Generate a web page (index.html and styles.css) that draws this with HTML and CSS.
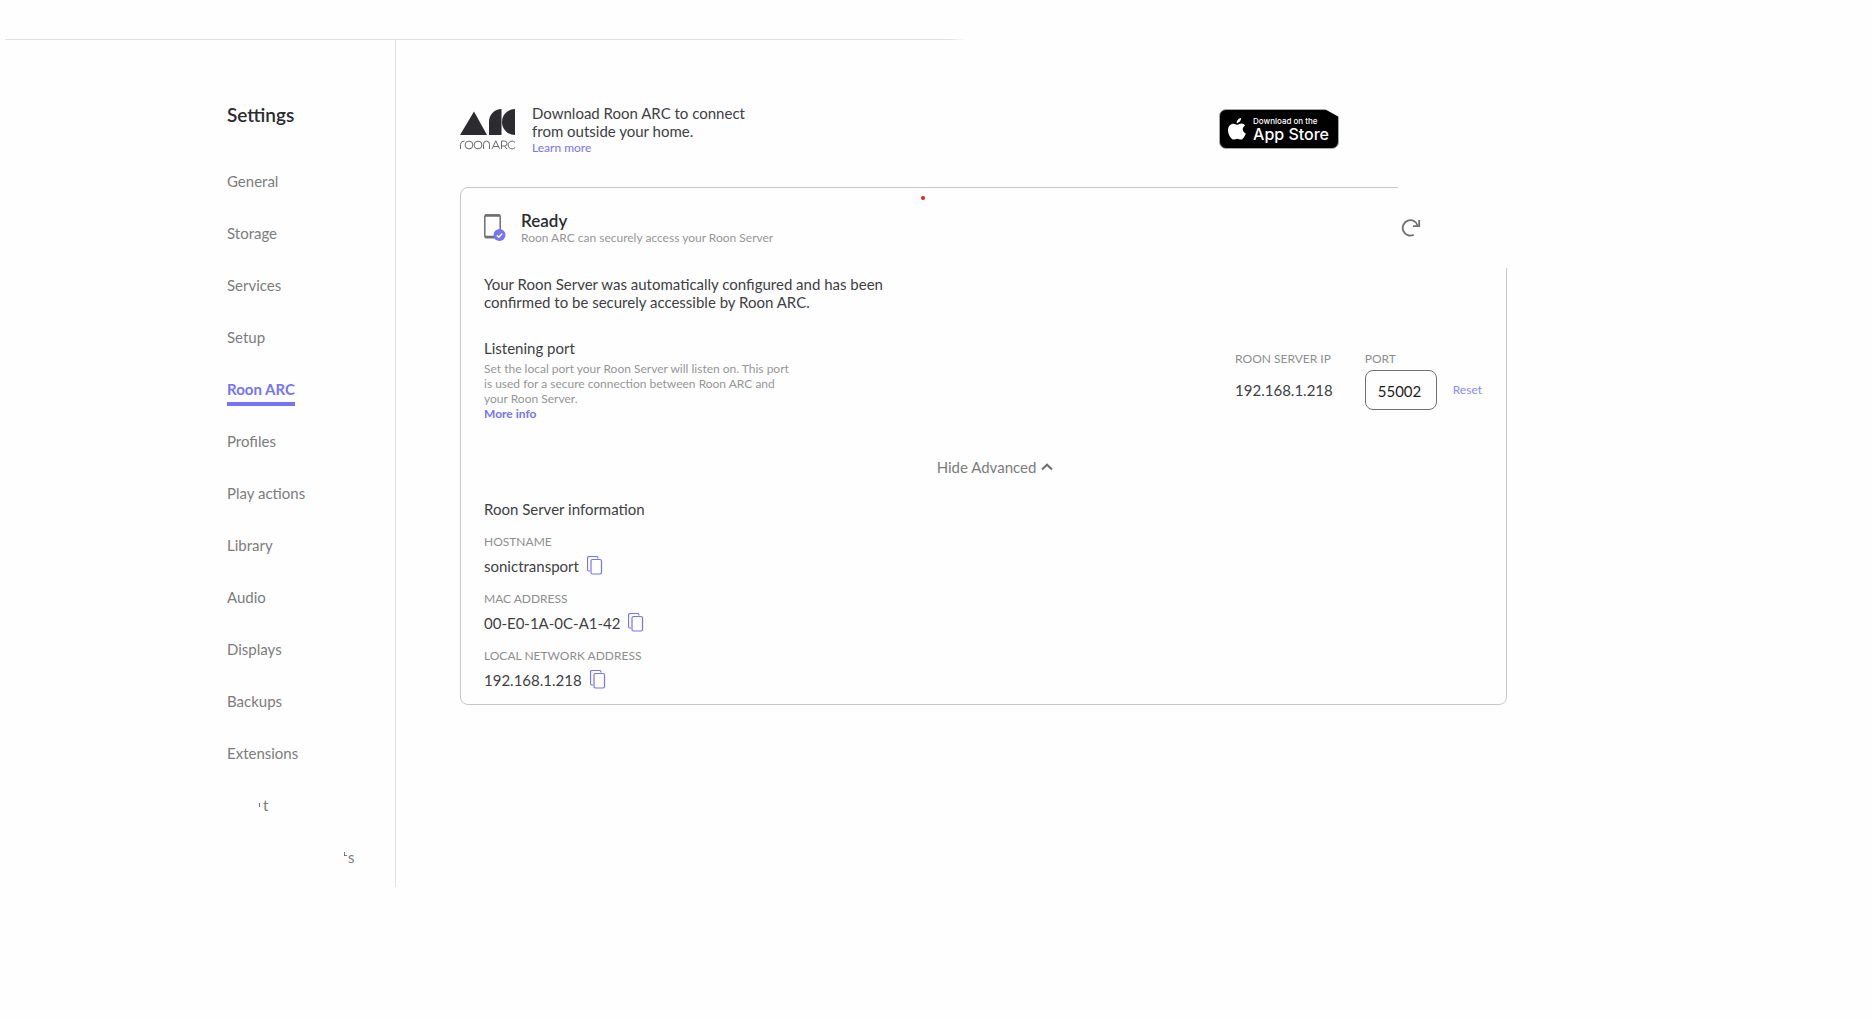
FILE: index.html
```
<!DOCTYPE html>
<html lang="en">
<head>
  <meta charset="UTF-8">
  <meta name="viewport" content="width=device-width, initial-scale=1.0">
  <title>Settings - Roon ARC</title>
  <link rel="stylesheet" href="styles.css">
</head>
<body>
<header class="topbar"></header>

<div class="layout">
  <aside class="sidebar">
    <h1>Settings</h1>
    <nav>
      <a href="#">General</a>
      <a href="#">Storage</a>
      <a href="#">Services</a>
      <a href="#">Setup</a>
      <a href="#" class="active">Roon ARC</a>
      <a href="#">Profiles</a>
      <a href="#">Play actions</a>
      <a href="#">Library</a>
      <a href="#">Audio</a>
      <a href="#">Displays</a>
      <a href="#">Backups</a>
      <a href="#">Extensions</a>
      <a href="#" class="faded"><i class="tick"></i>t</a>
      <a href="#" class="faded far"><i class="tick corner"></i>s</a>
    </nav>
  </aside>

  <main>
    <section class="download">
      <svg class="logo" width="56" height="42" viewBox="0 0 56 42" role="img" aria-label="Roon ARC">
        <g fill="#2b2b30">
          <path d="M0 26L14 2.500L27 26z"/>
          <path d="M29 26V12.500A12.500 12.500 0 0 1 41.500 0V26z"/>
          <path d="M55 0V26A13 13 0 0 1 55 0z"/>
        </g>
        <g fill="none" stroke="#6a6a6e" stroke-width="1">
          <path d="M.5 40V35.500Q.5 32 4.500 32"/>
          <circle cx="9" cy="36" r="3.900"/>
          <circle cx="18" cy="36" r="3.900"/>
          <path d="M23.500 40V35.500A3 3.500 0 0 1 29.500 35.500V40"/>
          <path d="M32 40L35.800 31.800L39.600 40M33.300 37.500H38.300"/>
          <path d="M41.500 40V32H44.500A2.500 2.500 0 0 1 44.500 37H41.500M44.500 37L47 40"/>
          <path d="M55 33.500A3.900 3.900 0 1 0 55 38.500"/>
        </g>
      </svg>
      <div class="download-text">
        <p>Download Roon ARC to connect<br>from outside your home.</p>
        <a href="#">Learn more</a>
      </div>
      <a href="#" class="badge">
        <svg width="18" height="22" viewBox="0 0 18 22" fill="#fff" aria-hidden="true">
          <path d="M13 0C13.200 2.600 11 5 8.700 5C8.400 2.600 10.700 .3 13 0z"/>
          <path d="M17 7.600C13.600 9.700 14.300 14 17.800 15.400C16.700 18.400 14.900 21.600 12.800 21.600C11.500 21.600 11 20.800 9.300 20.800C7.600 20.800 7 21.600 5.800 21.600C3.200 21.600 0 16.500 0 12.200C0 8 2.700 5.700 5.300 5.700C7 5.700 8.200 6.800 9.400 6.800C10.500 6.800 11.800 5.600 13.700 5.600C15 5.600 16.300 6.400 17 7.600z"/>
        </svg>
        <span class="badge-text"><small>Download on the</small>App Store</span>
      </a>
    </section>

    <section class="card">
      <i class="dot"></i>
      <div class="status">
        <svg width="22" height="28" viewBox="0 0 22 28" aria-hidden="true">
          <rect x=".8" y="1" width="15.400" height="22.500" rx="1.500" fill="none" stroke="#6e6e72" stroke-width="1.500"/>
          <path d="M1 1.500H16M1 23H11" stroke="#6e6e72" stroke-width="2.500"/>
          <circle cx="15.500" cy="21" r="6" fill="#7574f3"/>
          <path d="M12.800 21.200L14.800 23.200L18.300 19.500" fill="none" stroke="#fff" stroke-width="1.300"/>
        </svg>
        <div class="status-text">
          <h2>Ready</h2>
          <p class="hint">Roon ARC can securely access your Roon Server</p>
        </div>
        <button class="refresh" aria-label="Refresh">
          <svg width="20" height="18" viewBox="0 0 20 18" fill="none" stroke="#707072" stroke-width="1.800">
            <path d="M12.800 15.800A7.700 7.700 0 1 1 16.800 6.800"/>
            <path d="M18.200 1V7.200H12"/>
          </svg>
        </button>
      </div>

      <p class="summary">Your Roon Server was automatically configured and has been<br>confirmed to be securely accessible by Roon ARC.</p>

      <div class="port-row">
        <div class="port-info">
          <h3>Listening port</h3>
          <p class="hint">Set the local port your Roon Server will listen on. This port<br>is used for a secure connection between Roon ARC and<br>your Roon Server.</p>
          <a href="#">More info</a>
        </div>
        <div class="field">
          <span class="label">ROON SERVER IP</span>
          <span class="ip">192.168.1.218</span>
        </div>
        <div class="field">
          <label class="label" for="port">PORT</label>
          <input type="text" id="port" value="55002">
        </div>
        <button class="reset">Reset</button>
      </div>

      <button class="advanced">Hide Advanced
        <svg width="12" height="8" viewBox="0 0 12 8" fill="none" stroke="#707072" stroke-width="2"><path d="M1 6.500L6 1.700L11 6.500"/></svg>
      </button>

      <h3>Roon Server information</h3>
      <dl>
        <dt>HOSTNAME</dt>
        <dd>sonictransport
          <button class="copy" aria-label="Copy hostname"><svg width="16" height="20" viewBox="0 0 16 20"><path d="M3 15H2Q.5 15 .5 13.500V2.500Q.5 .5 2.500 .5H9.500Q11 .5 11 2.500"/><rect x="4" y="3.500" width="10.500" height="14.500" rx="1.500"/></svg></button>
        </dd>
        <dt>MAC ADDRESS</dt>
        <dd>00-E0-1A-0C-A1-42
          <button class="copy" aria-label="Copy MAC address"><svg width="16" height="20" viewBox="0 0 16 20"><path d="M3 15H2Q.5 15 .5 13.500V2.500Q.5 .5 2.500 .5H9.500Q11 .5 11 2.500"/><rect x="4" y="3.500" width="10.500" height="14.500" rx="1.500"/></svg></button>
        </dd>
        <dt>LOCAL NETWORK ADDRESS</dt>
        <dd>192.168.1.218
          <button class="copy" aria-label="Copy network address"><svg width="16" height="20" viewBox="0 0 16 20"><path d="M3 15H2Q.5 15 .5 13.500V2.500Q.5 .5 2.500 .5H9.500Q11 .5 11 2.500"/><rect x="4" y="3.500" width="10.500" height="14.500" rx="1.500"/></svg></button>
        </dd>
      </dl>
    </section>
  </main>
</div>
</body>
</html>
```
FILE: styles.css
```
* {
  box-sizing: border-box;
}
body {
  margin: 0;
  background: #fefefe;
  color: #404044;
  font-family: Lato, sans-serif;
  font-size: 15px;
  line-height: 18px;
}
h1, h2, h3, p, dl, dd {
  margin: 0;
}
a {
  color: #7574f3;
  text-decoration: none;
}
button {
  padding: 0;
  border: 0;
  background: none;
  font: inherit;
  cursor: pointer;
}
svg {
  display: block;
}
.topbar {
  height: 40px;
  margin-left: 5px;
  background: linear-gradient(to right, #e1e1e1 945px, transparent 962px) bottom / 100% 1px no-repeat;
}
.layout {
  display: flex;
  align-items: flex-start;
}

/* sidebar */
.sidebar {
  flex: 0 0 396px;
  padding: 63px 0 4px 227px;
  border-right: 1px solid #e1e1e1;
}
.sidebar h1 {
  color: #2b2b30;
  font-size: 19px;
  font-weight: 600;
  line-height: 24px;
  margin-bottom: 28px;
}
.sidebar nav {
  display: flex;
  flex-direction: column;
  align-items: flex-start;
}
.sidebar nav a {
  height: 52px;
  line-height: 52px;
  color: #7c7c7c;
}
.sidebar nav .active {
  color: #7574f3;
  font-weight: 700;
  background: linear-gradient(#7574f3, #7574f3) 0 39px / 100% 4px no-repeat;
}
.sidebar nav .faded {
  padding-left: 32px;
}
.sidebar nav .far {
  padding-left: 117px;
}
.tick {
  display: inline-block;
  width: 1px;
  height: 4px;
  margin-right: 3px;
  vertical-align: 4px;
  background: #737373;
}
.tick.corner {
  width: 3px;
  border-left: 1px solid #737373;
  border-bottom: 1px solid #737373;
  background: none;
  margin-right: 1px;
  vertical-align: 7px;
}

/* content */
main {
  flex: 1;
  padding: 63px 366px 0 64px;
}
.download {
  display: flex;
  align-items: flex-start;
  padding-top: 1px;
  margin-bottom: 32px;
}
.logo {
  margin-top: 5px;
  margin-right: 16px;
}
.download-text a {
  display: block;
  font-size: 12px;
  line-height: 15px;
}
.badge {
  display: flex;
  align-items: center;
  gap: 7px;
  height: 40px;
  margin: 5px 168px 0 auto;
  padding: 0 9px 0 8px;
  border: 1px solid #a6a6a6;
  border-radius: 7px;
  background: #000;
  color: #fff;
  clip-path: polygon(0 0, 88% 0, 100% 20%, 100% 100%, 0 100%);
}
.badge-text {
  font-family: Inter, sans-serif;
  font-size: 16px;
  font-weight: 500;
  line-height: 16px;
}
.badge-text small {
  display: block;
  font-size: 8px;
  line-height: 9px;
}
.card {
  position: relative;
  padding: 23px 24px 7px 23px;
  border: 1px solid #c8c8c8;
  border-radius: 8px;
}
/* the status corner has no outline */
.card::before {
  content: "";
  position: absolute;
  top: -1px;
  right: -1px;
  width: 109px;
  height: 81px;
  background: #fefefe;
}
.dot {
  position: absolute;
  top: 8px;
  left: 44%;
  width: 4px;
  height: 4px;
  border-radius: 50%;
  background: #e02020;
}
.status {
  display: flex;
  align-items: flex-start;
  margin-bottom: 30px;
}
.status > svg {
  margin: 3px 15px 0 0;
}
.status h2 {
  color: #2b2b30;
  font-size: 17px;
  font-weight: 600;
  line-height: 19px;
}
.hint {
  color: #969696;
  font-size: 12px;
  line-height: 15px;
}
.refresh {
  position: relative;
  margin: 8px 61px 0 auto;
}
.summary {
  margin-bottom: 28px;
}
h3 {
  font-size: 15px;
  font-weight: 400;
}
.port-row {
  display: flex;
  align-items: flex-start;
  margin-bottom: 37px;
}
.port-info {
  flex: 1;
}
.port-info .hint {
  margin-top: 4px;
}
.port-info a {
  display: block;
  font-size: 12px;
  font-weight: 700;
  line-height: 15px;
}
.field {
  display: flex;
  flex-direction: column;
  margin-top: 12px;
  margin-right: 32px;
}
.label, dt {
  color: #8e8e8e;
  font-size: 12px;
  line-height: 15px;
}
.ip {
  line-height: 48px;
}
.field input {
  width: 72px;
  height: 40px;
  margin-top: 4px;
  padding: 2px 12px 0;
  border: 1px solid #707072;
  border-radius: 8px;
  background: #fefefe;
  color: #1c1c1c;
  font: inherit;
}
.field:has(input) {
  margin-right: 16px;
}
.reset {
  margin-top: 43px;
  color: #8a89f5;
  font-size: 12px;
  line-height: 15px;
}
.advanced {
  display: flex;
  align-items: center;
  gap: 5px;
  margin: 0 auto 24px;
  color: #7c7c7c;
  position: relative;
  left: 12px;
}
dl {
  margin-top: 16px;
}
dd {
  display: flex;
  align-items: center;
  gap: 8px;
  height: 42px;
  padding-bottom: 8px;
}
dd:last-child {
  height: 34px;
  padding-bottom: 0;
}
.copy svg {
  fill: #fefefe;
  stroke: #7574f3;
  stroke-width: 1.2;
}
```
